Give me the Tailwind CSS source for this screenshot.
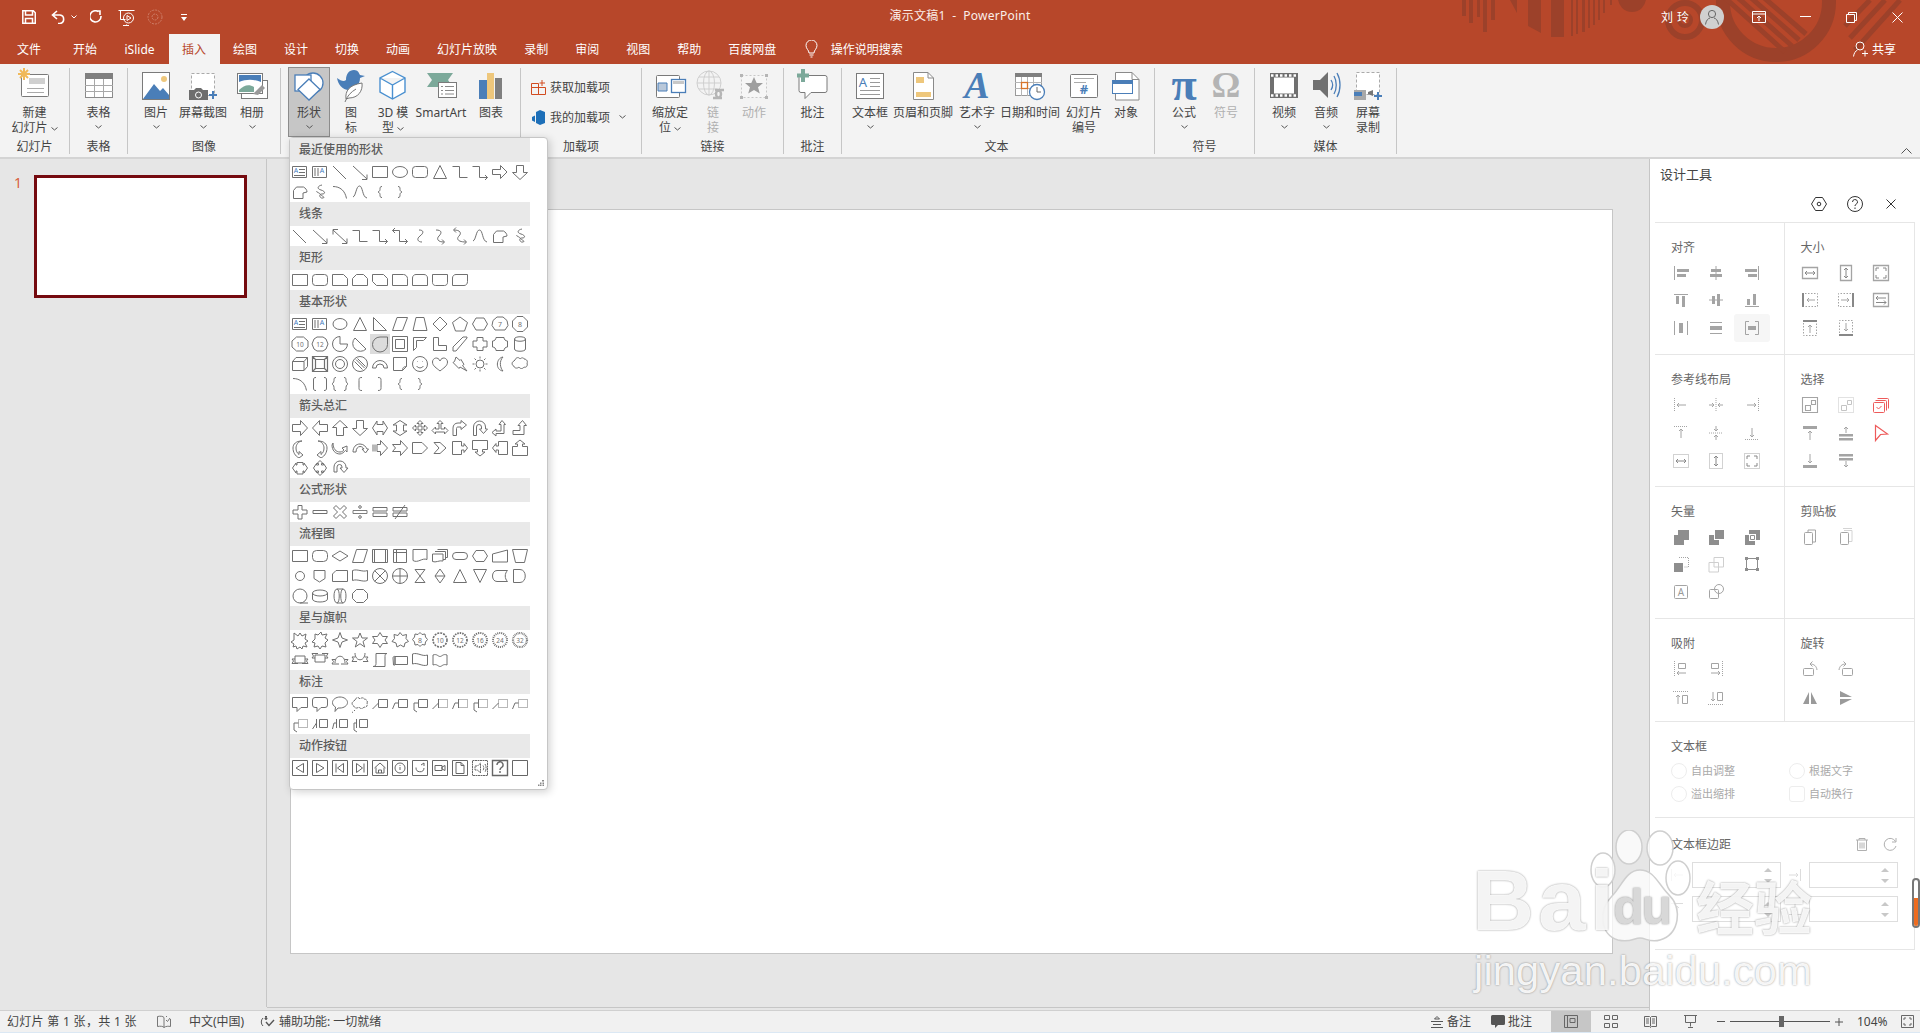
<!DOCTYPE html>
<html lang="zh-CN">
<head>
<meta charset="utf-8">
<title>演示文稿1 - PowerPoint</title>
<script src="https://cdn.jsdelivr.net/npm/@tailwindcss/browser@4"></script>
</head>
<body class="font-['Noto_Sans','Noto_Sans_CJK_SC',sans-serif]">
<div class="relative w-[1920px] h-[1033px] overflow-hidden flex flex-col bg-[#e6e6e6] text-[12px] leading-[15px] text-[#444]">

<!-- title bar -->
<header class="relative h-[64px] shrink-0 bg-[#b7472a] text-white flex flex-col">
  <svg class="absolute left-[1440px] top-0 w-[480px] h-[64px]" viewBox="0 0 480 64" fill="#9c412a">
    <path d="M22 0h4v16h-4zM29 0h4v23h-4zM37 0h3v17h-3zM43 0h4v32h-4zM51 0h4v20h-4zM70 0h7v13zM88 0h13v33l-13-7zM111 0h13v37h-13zM131 0h2v36h-2zM136 0h2v34h-2zM142 0h3v32h-3zM148 0h2v28h-2zM153 0h2v25h-2zM158 0h2v20h-2zM163 0h2v13h-2zM170 0h2v5h-2z"/>
    <circle cx="192" cy="-2" r="14"/>
    <g fill="none" stroke="#9c412a">
      <circle cx="245" cy="20" r="17" stroke-width="6"/>
      <circle cx="245" cy="20" r="6" stroke-width="4"/>
      <circle cx="336" cy="2" r="53" stroke-width="14"/>
      <path stroke-width="5" d="M283-4l62 56M296-4l56 50M309-4l50 44M322-4l44 38M430 0l-25 26M445 0l-35 38M460 0l-45 50"/>
    </g>
  </svg>
  <div class="absolute inset-x-0 top-[7px] text-center text-[12px] leading-[17px] tracking-[.25px] text-[#fbeee9]">演示文稿1&nbsp; - &nbsp;PowerPoint</div>
  <div class="relative h-[34px] flex items-center pl-[22px]">
    <svg class="w-[14px] h-[14px]" viewBox="0 0 14 14" fill="none" stroke="#fff" stroke-width="1.5"><path d="M.8.8h10.5l2 2v10.4H.8zM3.5 1v4h7V1M3.5 13V8.5h7V13"/></svg>
    <svg class="ml-[15px] w-[15px] h-[14px]" viewBox="0 0 15 14" fill="none" stroke="#fff" stroke-width="1.6"><path d="M6 1L1.5 5 6 9M1.5 5H9a4.3 4.3 0 0 1 0 8.5H7"/></svg>
    <svg class="ml-[5px] w-[6px] h-[4px]" viewBox="0 0 6 4" fill="none" stroke="#fff"><path d="M.5.500L3 3 5.500.5"/></svg>
    <svg class="ml-[13px] w-[13px] h-[14px]" viewBox="0 0 13 14" fill="none" stroke="#fff" stroke-width="1.6"><path d="M8.500 1.700A5.600 5.600 0 1 0 11 6M6 1h4v4"/></svg>
    <svg class="ml-[15px] w-[17px] h-[17px]" viewBox="0 0 17 17" fill="none" stroke="#fff"><path d="M.5 1.500h16M2.500 1.500v9h5M8.500 15.500v1M5 16.500h6"/><circle cx="10.500" cy="9" r="5"/><path d="M9 6.500l4 2.500-4 2.500z"/></svg>
    <svg class="ml-[12px] w-[16px] h-[16px] opacity-40" viewBox="0 0 16 16" fill="none" stroke="#f3cfc4" stroke-dasharray="2 1"><circle cx="8" cy="8" r="7"/><circle cx="8" cy="8" r="3"/></svg>
    <svg class="ml-[18px] w-[6px] h-[7px]" viewBox="0 0 6 7" fill="#fff"><path d="M0 0h6v1H0zM0 3h6L3 7z"/></svg>
    <div class="ml-auto tracking-[4px] text-[12px]">刘玲</div>
    <div class="ml-[7px] size-[24px] rounded-full bg-[#d0d0d0] flex items-center justify-center">
      <svg class="size-[16px]" viewBox="0 0 16 16" fill="none" stroke="#666"><circle cx="8" cy="5" r="3.600"/><path d="M1.500 15.500c.5-4 2.500-6 4.500-6.500M14.500 15.500c-.5-4-2.500-6-4.500-6.500"/></svg>
    </div>
    <div class="ml-[12px] w-[46px] flex justify-center"><svg class="w-[14px] h-[12px]" viewBox="0 0 14 12" fill="none" stroke="#fff"><path d="M.5.500h13v11H.5zM.5 3h13M7 10V5M5 7l2-2 2 2"/></svg></div>
    <div class="w-[46px] flex justify-center"><svg class="w-[11px] h-[2px]" viewBox="0 0 11 2" fill="#fff"><path d="M0 0h11v1H0z"/></svg></div>
    <div class="w-[46px] flex justify-center"><svg class="w-[11px] h-[11px]" viewBox="0 0 11 11" fill="none" stroke="#fff"><path d="M.5 2.500h8v8h-8zM2.500 2.500v-2h8v8h-2"/></svg></div>
    <div class="w-[46px] flex justify-center"><svg class="w-[11px] h-[11px]" viewBox="0 0 11 11" fill="none" stroke="#fff"><path d="M.5.500l10 10M10.500.500l-10 10"/></svg></div>
  </div>
  <nav class="relative h-[30px] flex items-center">
    <span class="pl-[17px] pr-[18.500px]">文件</span>
    <span class="px-[13.500px]">开始</span>
    <span class="w-[58px] text-center">iSlide</span>
    <span class="px-[13.500px] h-full flex items-center bg-[#f3f3f3] text-[#b7472a]">插入</span>
    <span class="px-[13.500px]">绘图</span>
    <span class="px-[13.500px]">设计</span>
    <span class="px-[13.500px]">切换</span>
    <span class="px-[13.500px]">动画</span>
    <span class="px-[13.500px]">幻灯片放映</span>
    <span class="px-[13.500px]">录制</span>
    <span class="px-[13.500px]">审阅</span>
    <span class="px-[13.500px]">视图</span>
    <span class="px-[13.500px]">帮助</span>
    <span class="px-[13.500px]">百度网盘</span>
    <svg class="ml-[15px] w-[13px] h-[18px]" viewBox="0 0 13 18" fill="none" stroke="#fff"><path d="M4 13c0-3-3-4-3-7.500a5.500 5.500 0 0 1 11 0C12 9 9 10 9 13zM4.500 15h4M5.500 17h2"/></svg>
    <span class="ml-[13px]">操作说明搜索</span>
    <span class="ml-auto mr-[24px] flex items-center gap-[4px]">
      <svg class="w-[15px] h-[16px]" viewBox="0 0 15 16" fill="none" stroke="#fff"><circle cx="7" cy="5" r="4"/><path d="M.5 15.500c.5-3.500 2-5.500 4-6.500M9 12.500h6M12 9.500v6"/></svg>
      共享
    </span>
  </nav>
</header>

<!-- ribbon -->
<section class="relative h-[95px] shrink-0 bg-[#f3f3f3] border-b-2 border-[#d4d4d4] flex pt-[4px]">
  <!-- 幻灯片 -->
  <div class="w-[70px] h-[86px] border-r border-[#c6c6c6] flex flex-col">
    <div class="h-[72px] flex">
      <div class="w-[69px] flex flex-col items-center">
        <svg class="size-[34px]" viewBox="0 0 34 34"><rect x="3.500" y="6.500" width="27" height="22" rx="1" fill="#fff" stroke="#7a7a7a"/><rect x="11" y="10" width="16" height="6" fill="#d0d0d0"/><path d="M9 20.500h17M9 24.500h17" stroke="#aaa"/><path d="M6 0v12M0 6h12M2 2l8 8M10 2l-8 8" stroke="#f0b95a" stroke-width="2"/></svg>
        <span class="mt-[3px]">新建</span><span>幻灯片 <svg class="inline w-[7px] h-[4px]" viewBox="0 0 7 4" fill="none" stroke="#555"><path d="M.5.500L3.500 3l3-2.500"/></svg></span>
      </div>
    </div>
    <div class="text-center leading-[14px]">幻灯片</div>
  </div>
  <!-- 表格 -->
  <div class="w-[58px] h-[86px] border-r border-[#c6c6c6] flex flex-col">
    <div class="h-[72px] flex flex-col items-center">
      <svg class="size-[34px]" viewBox="0 0 34 34"><rect x="3.500" y="5.500" width="27" height="24" fill="#fff" stroke="#8a8a8a"/><rect x="3" y="5" width="28" height="6" fill="#7f7f7f"/><path d="M3 17.500h28M3 23.500h28M12.500 11v18M21.500 11v18" stroke="#a8a8a8"/></svg>
      <span class="mt-[3px]">表格</span>
      <svg class="mt-[5px] w-[7px] h-[4px]" viewBox="0 0 7 4" fill="none" stroke="#555"><path d="M.5.500L3.500 3l3-2.500"/></svg>
    </div>
    <div class="text-center leading-[14px]">表格</div>
  </div>
  <!-- 图像 -->
  <div class="w-[153px] h-[86px] border-r border-[#c6c6c6] flex flex-col">
    <div class="h-[72px] flex pl-[6px]">
      <div class="w-[44px] flex flex-col items-center">
        <svg class="size-[34px]" viewBox="0 0 34 34"><rect x="3.500" y="4.500" width="27" height="27" fill="#fff" stroke="#7a7a7a"/><circle cx="25" cy="11" r="3" fill="#eec77c"/><path d="M4 31l11-15 6 7 3-3 6 7v4z" fill="#4a7eb8"/></svg>
        <span class="mt-[3px]">图片</span>
        <svg class="mt-[5px] w-[7px] h-[4px]" viewBox="0 0 7 4" fill="none" stroke="#555"><path d="M.5.500L3.500 3l3-2.500"/></svg>
      </div>
      <div class="w-[50px] flex flex-col items-center">
        <svg class="size-[34px]" viewBox="0 0 34 34"><rect x="5.500" y="5.500" width="23" height="22" fill="#fff" stroke="#aaa" stroke-dasharray="3 2"/><path d="M3 22h5l2-2h5l2 2h5v10H3z" fill="#6d6d6d"/><circle cx="12.500" cy="27" r="3" fill="#6d6d6d" stroke="#fff"/><path d="M27 23v8M23 27h8" stroke="#4a7eb8" stroke-width="2"/></svg>
        <span class="mt-[3px] whitespace-nowrap">屏幕截图</span>
        <svg class="mt-[5px] w-[7px] h-[4px]" viewBox="0 0 7 4" fill="none" stroke="#555"><path d="M.5.500L3.500 3l3-2.500"/></svg>
      </div>
      <div class="w-[48px] flex flex-col items-center">
        <svg class="size-[34px]" viewBox="0 0 34 34"><rect x="6.500" y="12.500" width="26" height="18" fill="#fff" stroke="#7a7a7a"/><rect x="2.500" y="5.500" width="25" height="20" fill="#fff" stroke="#7a7a7a"/><path d="M4 7h22v7c-7-3-15-3-22 0z" fill="#4a7eb8"/><path d="M4 22c5-5 10-6 15-3v5H4z" fill="#7ca99a"/><path d="M18 26l9-9 3 3-7 7z" fill="#999"/></svg>
        <span class="mt-[3px]">相册</span>
        <svg class="mt-[5px] w-[7px] h-[4px]" viewBox="0 0 7 4" fill="none" stroke="#555"><path d="M.5.500L3.500 3l3-2.500"/></svg>
      </div>
    </div>
    <div class="text-center leading-[14px]">图像</div>
  </div>
  <!-- 插图 -->
  <div class="w-[240px] h-[86px] border-r border-[#c6c6c6] flex flex-col">
    <div class="h-[72px] flex pl-[7px]">
      <div class="w-[42px] h-[70px] -mt-[1px] bg-[#c6c6c6] border border-[#8c8c8c] flex flex-col items-center">
        <svg class="size-[34px] shrink-0" viewBox="0 0 34 34" fill="#fff" stroke="#4a7eb8" stroke-width="1.300"><circle cx="21" cy="15" r="10"/><rect x="3" y="7" width="16" height="16"/><path d="M17 11l11 10.500L17 32 6 21.500z"/></svg>
        <span class="mt-[3px]">形状</span>
        <svg class="mt-[5px] w-[7px] h-[4px]" viewBox="0 0 7 4" fill="none" stroke="#555"><path d="M.5.500L3.500 3l3-2.500"/></svg>
      </div>
      <div class="w-[42px] flex flex-col items-center">
        <svg class="size-[34px]" viewBox="0 0 34 34"><path d="M3 10c4 3 7 4 9 2 0-6 3-10 8-10 4 0 5 3 6 5l5 1-5 2c0 6-4 11-11 12C8 22 4 16 3 10z" fill="#4a7eb8"/><path d="M12 31c-1-8 3-14 16-16 1 8-4 15-13 15z" fill="#fff" stroke="#777"/><path d="M11 34c2-6 6-10 11-13" fill="none" stroke="#777"/></svg>
        <span class="mt-[3px]">图</span><span>标</span>
      </div>
      <div class="w-[42px] flex flex-col items-center">
        <svg class="size-[34px]" viewBox="0 0 34 34" fill="#fff" stroke="#4a90d0" stroke-width="1.400"><path d="M16.500 3.500L29 10v14l-12.500 7L4 24V10zM4 10l12.500 7L29 10M16.500 17v14"/></svg>
        <span class="mt-[3px] whitespace-nowrap">3D 模</span><span>型 <svg class="inline w-[7px] h-[4px]" viewBox="0 0 7 4" fill="none" stroke="#555"><path d="M.5.500L3.500 3l3-2.500"/></svg></span>
      </div>
      <div class="w-[54px] flex flex-col items-center">
        <svg class="size-[34px]" viewBox="0 0 34 34"><path d="M3 5h26l-5 7 5 7H3l5-7z" fill="#7ca99a"/><rect x="14.500" y="14.500" width="18" height="15" fill="#fff" stroke="#7a7a7a"/><path d="M17 18.500h2M21 18.500h9M17 22.500h2M21 22.500h9M17 26h2M21 26h9" stroke="#8a8a8a"/></svg>
        <span class="mt-[3px]">SmartArt</span>
      </div>
      <div class="w-[46px] flex flex-col items-center">
        <svg class="size-[34px]" viewBox="0 0 34 34"><rect x="5" y="12" width="8" height="19" fill="#4a7eb8"/><rect x="13" y="5" width="7" height="26" fill="#eec77c"/><rect x="21" y="10" width="7" height="21" fill="#7f7f7f"/></svg>
        <span class="mt-[3px]">图表</span>
      </div>
    </div>
    <div class="text-center leading-[14px]">插图</div>
  </div>
  <!-- 加载项 -->
  <div class="w-[121px] h-[86px] border-r border-[#c6c6c6] flex flex-col">
    <div class="h-[72px] flex flex-col pl-[10px] pt-[11px] gap-[14px]">
      <div class="flex items-center gap-[4px] h-[16px]">
        <svg class="size-[15px]" viewBox="0 0 15 15" fill="none" stroke="#d24b1f"><path d="M.5 3.500h7v4h-7zM.5 7.500h7v7h-7zM7.500 7.500h7v7h-7zM11 0v6M8.500 3h5.500" /></svg>
        <span>获取加载项</span>
      </div>
      <div class="flex items-center gap-[4px] h-[16px]">
        <svg class="size-[15px]" viewBox="0 0 15 15" fill="#1d6fb8"><path d="M5 2l4-2 5 2v11l-5 2-4-2zM1 7l3-1.500V12L1 10.500z"/></svg>
        <span>我的加载项</span>
        <svg class="ml-[5px] w-[7px] h-[4px]" viewBox="0 0 7 4" fill="none" stroke="#555"><path d="M.5.500L3.500 3l3-2.500"/></svg>
      </div>
    </div>
    <div class="text-center leading-[14px]">加载项</div>
  </div>
  <!-- 链接 -->
  <div class="w-[142px] h-[86px] border-r border-[#c6c6c6] flex flex-col">
    <div class="h-[72px] flex pl-[6px]">
      <div class="w-[44px] flex flex-col items-center">
        <svg class="size-[34px]" viewBox="0 0 34 34"><rect x="3.500" y="7.500" width="23" height="22" rx="1" fill="#fff" stroke="#7a7a7a"/><path d="M5 15h9v8H5z" fill="#b9c8da" stroke="#4a7eb8"/><rect x="18.500" y="11.500" width="14" height="13" fill="#fff" stroke="#4a7eb8" stroke-width="1.300"/><rect x="20" y="13" width="11" height="3" fill="#c8c8c8"/></svg>
        <span class="mt-[3px]">缩放定</span><span>位 <svg class="inline w-[7px] h-[4px]" viewBox="0 0 7 4" fill="none" stroke="#555"><path d="M.5.500L3.500 3l3-2.500"/></svg></span>
      </div>
      <div class="w-[42px] flex flex-col items-center text-[#b0b0b0]">
        <svg class="size-[34px]" viewBox="0 0 34 34" fill="none" stroke="#cfcfcf"><circle cx="13" cy="15" r="12"/><ellipse cx="13" cy="15" rx="5.500" ry="12"/><path d="M1 15h24M3 9h20M3 21h20M13 3v24"/><path d="M17 30h4a4 4 0 0 0 0-8h-2M28 22h-4a4 4 0 0 0 0 8h2" stroke="#b5b5b5" stroke-width="2.500"/></svg>
        <span class="mt-[3px]">链</span><span>接</span>
      </div>
      <div class="w-[40px] flex flex-col items-center text-[#b0b0b0]">
        <svg class="size-[34px]" viewBox="0 0 34 34"><rect x="4.500" y="7.500" width="25" height="22" fill="#f6f6f6" stroke="#c8c8c8" stroke-dasharray="2 2"/><path d="M17 9l2.700 6h6.300l-5 4.200 1.800 6.300L17 22l-5.800 3.500 1.800-6.300-5-4.200h6.300z" fill="#9e9e9e"/><path d="M3 6h3v3H3zM28 6h3v3h-3zM3 28h3v3H3zM28 28h3v3h-3z" fill="#b5b5b5"/></svg>
        <span class="mt-[3px]">动作</span>
      </div>
    </div>
    <div class="text-center leading-[14px]">链接</div>
  </div>
  <!-- 批注 -->
  <div class="w-[58px] h-[86px] border-r border-[#c6c6c6] flex flex-col">
    <div class="h-[72px] flex flex-col items-center">
      <svg class="size-[34px]" viewBox="0 0 34 34"><path d="M5 7.500h24a2 2 0 0 1 2 2v13a2 2 0 0 1-2 2H15l-6 6v-6H5a2 2 0 0 1-2-2v-13a2 2 0 0 1 2-2z" fill="#fff" stroke="#7a7a7a"/><path d="M7 1v13M1 7.500h12" stroke="#7ca99a" stroke-width="4"/></svg>
      <span class="mt-[3px]">批注</span>
    </div>
    <div class="text-center leading-[14px]">批注</div>
  </div>
  <!-- 文本 -->
  <div class="w-[313px] h-[86px] border-r border-[#c6c6c6] flex flex-col">
    <div class="h-[72px] flex pl-[5px]">
      <div class="w-[46px] flex flex-col items-center">
        <svg class="size-[34px]" viewBox="0 0 34 34"><rect x="3.500" y="5.500" width="27" height="25" fill="#fff" stroke="#7a7a7a"/><text x="10" y="19" font-size="13" fill="#4a7eb8" text-anchor="middle">A</text><path d="M17 10.500h10M17 14.500h10M17 18.500h10M7 22.500h20M7 26.500h20" stroke="#9a9a9a"/></svg>
        <span class="mt-[3px]">文本框</span>
        <svg class="mt-[5px] w-[7px] h-[4px]" viewBox="0 0 7 4" fill="none" stroke="#555"><path d="M.5.500L3.500 3l3-2.500"/></svg>
      </div>
      <div class="w-[60px] flex flex-col items-center">
        <svg class="size-[34px]" viewBox="0 0 34 34"><path d="M7.500 4.500H22l5.500 5.500v21.500h-20z" fill="#fff" stroke="#8a8a8a"/><path d="M22 4.500V10h5.500" fill="none" stroke="#8a8a8a"/><rect x="10" y="9" width="8" height="6" fill="#eec77c"/><rect x="10" y="24" width="15" height="5" fill="#eec77c"/></svg>
        <span class="mt-[3px] whitespace-nowrap">页眉和页脚</span>
      </div>
      <div class="w-[48px] flex flex-col items-center">
        <span class="h-[34px] leading-[34px] text-[38px] font-['Liberation_Serif',serif] italic font-bold text-[#4a7eb8]">A</span>
        <span class="mt-[3px]">艺术字</span>
        <svg class="mt-[5px] w-[7px] h-[4px]" viewBox="0 0 7 4" fill="none" stroke="#555"><path d="M.5.500L3.500 3l3-2.500"/></svg>
      </div>
      <div class="w-[58px] flex flex-col items-center">
        <svg class="size-[34px]" viewBox="0 0 34 34"><rect x="2.500" y="5.500" width="26" height="22" fill="#fff" stroke="#9a9a9a"/><rect x="2" y="5" width="27" height="4" fill="#7f7f7f"/><path d="M2 14.500h27M2 20.500h27M8.500 9v19M14.500 9v19M20.500 9v19" stroke="#b5b5b5"/><rect x="8.500" y="14.500" width="6" height="6" fill="#fff" stroke="#d8742a" stroke-width="1.300"/><circle cx="24" cy="24" r="7.500" fill="#fff" stroke="#4a7eb8" stroke-width="1.300"/><path d="M24 19v5h4" fill="none" stroke="#666"/></svg>
        <span class="mt-[3px] whitespace-nowrap">日期和时间</span>
      </div>
      <div class="w-[50px] flex flex-col items-center">
        <svg class="size-[34px]" viewBox="0 0 34 34"><rect x="3.500" y="6.500" width="27" height="23" rx="1" fill="#fff" stroke="#7a7a7a"/><path d="M7 10.500h20M7 14.500h12" stroke="#aaa"/><text x="17" y="26" font-size="13" fill="#4a7eb8" text-anchor="middle" font-weight="700">#</text></svg>
        <span class="mt-[3px] whitespace-nowrap">幻灯片</span><span>编号</span>
      </div>
      <div class="w-[34px] flex flex-col items-center">
        <svg class="size-[34px]" viewBox="0 0 34 34"><path d="M6.500 4.500H23l7 7v20.500H6.500z" fill="#fff" stroke="#8a8a8a"/><path d="M23 4.500v7h7" fill="none" stroke="#8a8a8a"/><rect x="3.500" y="12.500" width="20" height="13" fill="#fff" stroke="#4a7eb8"/><rect x="3" y="12" width="21" height="4" fill="#4a7eb8"/></svg>
        <span class="mt-[3px]">对象</span>
      </div>
    </div>
    <div class="text-center leading-[14px] -ml-[3px]">文本</div>
  </div>
  <!-- 符号 -->
  <div class="w-[100px] h-[86px] border-r border-[#c6c6c6] flex flex-col">
    <div class="h-[72px] flex pl-[8px]">
      <div class="w-[42px] flex flex-col items-center">
        <span class="h-[34px] leading-[34px] text-[46px] font-['Liberation_Serif',serif] font-bold text-[#4a7eb8]">π</span>
        <span class="mt-[3px]">公式</span>
        <svg class="mt-[5px] w-[7px] h-[4px]" viewBox="0 0 7 4" fill="none" stroke="#555"><path d="M.5.500L3.500 3l3-2.500"/></svg>
      </div>
      <div class="w-[42px] flex flex-col items-center text-[#b0b0b0]">
        <span class="h-[34px] leading-[34px] text-[36px] font-['Liberation_Serif',serif] font-bold text-[#b4b4b4]">Ω</span>
        <span class="mt-[3px]">符号</span>
      </div>
    </div>
    <div class="text-center leading-[14px]">符号</div>
  </div>
  <!-- 媒体 -->
  <div class="w-[142px] h-[86px] border-r border-[#c6c6c6] flex flex-col">
    <div class="h-[72px] flex pl-[8px]">
      <div class="w-[42px] flex flex-col items-center">
        <svg class="size-[34px]" viewBox="0 0 34 34"><rect x="3" y="5" width="28" height="25" fill="#6f6f6f"/><rect x="7" y="9.500" width="20" height="16" fill="#fff"/><path d="M4 7.500h26M4 27.500h26" stroke="#fff" stroke-width="2.500" stroke-dasharray="2.500 2"/></svg>
        <span class="mt-[3px]">视频</span>
        <svg class="mt-[5px] w-[7px] h-[4px]" viewBox="0 0 7 4" fill="none" stroke="#555"><path d="M.5.500L3.500 3l3-2.500"/></svg>
      </div>
      <div class="w-[42px] flex flex-col items-center">
        <svg class="size-[34px]" viewBox="0 0 34 34"><path d="M4 12h7l8-8v26l-8-8H4z" fill="#707070"/><path d="M22 12c2 3 2 7 0 10M25 8c3 5 3 13 0 18M28 5c4 7 4 17 0 24" fill="none" stroke="#4a7eb8" stroke-width="1.300"/></svg>
        <span class="mt-[3px]">音频</span>
        <svg class="mt-[5px] w-[7px] h-[4px]" viewBox="0 0 7 4" fill="none" stroke="#555"><path d="M.5.500L3.500 3l3-2.500"/></svg>
      </div>
      <div class="w-[42px] flex flex-col items-center">
        <svg class="size-[34px]" viewBox="0 0 34 34"><rect x="5.500" y="4.500" width="23" height="22" fill="#fff" stroke="#aaa" stroke-dasharray="3 2"/><rect x="3" y="22" width="12" height="10" fill="#a8a8a8"/><rect x="3" y="24" width="8" height="4" fill="#4a7eb8"/><path d="M17 24l5-2v6l-5-2z" fill="#777"/><path d="M27 24v8M23 28h8" stroke="#4a7eb8" stroke-width="2"/></svg>
        <span class="mt-[3px]">屏幕</span><span>录制</span>
      </div>
    </div>
    <div class="text-center leading-[14px]">媒体</div>
  </div>
  <svg class="absolute right-[8px] bottom-[3px] w-[11px] h-[6px]" viewBox="0 0 11 6" fill="none" stroke="#555"><path d="M.5 5.500l5-5 5 5"/></svg>
</section>

<!-- main -->
<main class="flex h-[851px] shrink-0">
  <aside class="w-[267px] border-r border-[#c6c6c6] h-[848px] flex items-start pt-[16px]">
    <span class="w-[34px] pl-[14px] text-[14px] leading-[16px] text-[#d9603d]">1</span>
    <div class="w-[213px] h-[123px] bg-white border-[3px] border-[#750a0f]"></div>
  </aside>
  <div class="w-[1382px] h-[849px] border-b border-[#c6c6c6] pl-[23px] pt-[50px]">
    <div class="w-[1323px] h-[745px] bg-white border border-[#c6c6c6]"></div>
  </div>
  <aside class="w-[271px] bg-white border-l border-[#c6c6c6] flex flex-col text-[#666]">
    <div class="h-[63px] relative flex flex-col">
      <div class="pl-[10px] pt-[7px] text-[13px] leading-[17px] text-[#444]">设计工具</div>
      <div class="flex justify-end items-center gap-[20px] pr-[21px] mt-[13px] text-[#333]">
        <svg class="size-[16px]" viewBox="0 0 16 16" fill="none" stroke="#333"><path d="M4.500 1.500h7L15.500 8l-4 6.500h-7L.5 8z"/><circle cx="8" cy="8" r="1.800"/></svg>
        <svg class="size-[16px]" viewBox="0 0 16 16" fill="none" stroke="#333"><circle cx="8" cy="8" r="7.500"/><path d="M5.500 6a2.500 2.500 0 1 1 3.500 2.300c-.7.400-1 .8-1 1.700M8 11.500v1.500"/></svg>
        <svg class="size-[16px]" viewBox="0 0 16 16" fill="none" stroke="#333"><path d="M3.500 3.500l9 9M12.500 3.500l-9 9"/></svg>
      </div>
    </div>
    <div class="ml-[5px] w-[260px] border-r border-[#e6e6e6]">
      <div class="grid grid-cols-2 fill-none stroke-[#a4a4a4]">
        <!-- 对齐 -->
        <div class="h-[132px] border-t border-r border-[#e6e6e6] pt-[17px] flex flex-col">
          <div class="pl-[16px] leading-[16px]">对齐</div>
          <div class="pl-[8px] mt-[3px] flex flex-wrap [&>div]:w-[35.500px] [&>div]:h-[27.500px] [&>div]:flex [&>div]:items-center [&>div]:justify-center">
            <div><svg class="size-5" viewBox="0 0 20 20"><path d="M3.500 3v14"/><path fill="#a4a4a4" stroke="none" d="M6 6h12v3H6zM6 11h9v3H6z"/></svg></div>
            <div><svg class="size-5" viewBox="0 0 20 20"><path d="M10 3v14"/><path fill="#a4a4a4" stroke="none" d="M5 6h10v3H5zM4 11h12v3H4z"/></svg></div>
            <div><svg class="size-5" viewBox="0 0 20 20"><path d="M16.500 3v14"/><path fill="#a4a4a4" stroke="none" d="M3 6h12v3H3zM6 11h9v3H6z"/></svg></div>
            <div><svg class="size-5" viewBox="0 0 20 20"><path d="M3 4.500h14"/><path fill="#a4a4a4" stroke="none" d="M5 6h3v8H5zM11 6h3v11h-3z"/></svg></div>
            <div><svg class="size-5" viewBox="0 0 20 20"><path d="M3 10h14"/><path fill="#a4a4a4" stroke="none" d="M6 6h3v8H6zM11 4h3v12h-3z"/></svg></div>
            <div><svg class="size-5" viewBox="0 0 20 20"><path d="M3 16.500h14"/><path fill="#a4a4a4" stroke="none" d="M5 9h3v6H5zM11 4h3v11h-3z"/></svg></div>
            <div><svg class="size-5" viewBox="0 0 20 20"><path d="M3.500 3v14M16.500 3v14"/><path fill="#a4a4a4" stroke="none" d="M8 5h4v10H8z"/></svg></div>
            <div><svg class="size-5" viewBox="0 0 20 20"><path d="M4 4.500h12M4 15.500h12"/><path fill="#a4a4a4" stroke="none" d="M4 8h12v4H4z"/></svg></div>
            <div class="bg-[#f6f6f6] rounded-[3px]"><svg class="size-5" viewBox="0 0 20 20"><path d="M7 3.500H3.500v13H7M13 3.500h3.500v13H13"/><path fill="#a4a4a4" stroke="none" d="M6 8h8v4H6z"/></svg></div>
          </div>
        </div>
        <!-- 大小 -->
        <div class="h-[132px] border-t border-[#e6e6e6] pt-[17px] flex flex-col">
          <div class="pl-[16px] leading-[16px]">大小</div>
          <div class="pl-[8px] mt-[3px] flex flex-wrap [&>div]:w-[35.500px] [&>div]:h-[27.500px] [&>div]:flex [&>div]:items-center [&>div]:justify-center">
            <div><svg class="size-5" viewBox="0 0 20 20"><path d="M2.500 4.500h15v11h-15z" stroke-width="1.300"/><path d="M5 10h10M7 8l-2 2 2 2M13 8l2 2-2 2" stroke="#888"/></svg></div>
            <div><svg class="size-5" viewBox="0 0 20 20"><path d="M4.500 2.500h11v15h-11z" stroke-width="1.300"/><path d="M10 5v10M8 7l2-2 2 2M8 13l2 2 2-2" stroke="#888"/></svg></div>
            <div><svg class="size-5" viewBox="0 0 20 20"><path d="M2.500 2.500h15v15h-15z" stroke-width="1.300"/><path d="M5 8V5h3M12 5h3v3M15 12v3h-3M8 15H5v-3" stroke="#888"/></svg></div>
            <div><svg class="size-5" viewBox="0 0 20 20"><path d="M3 3v14" stroke="#888" stroke-width="2"/><path d="M5 3.500h12.500v13H5" stroke-dasharray="1.500 1.500"/><path d="M7 10h8M9 8l-2 2 2 2"/></svg></div>
            <div><svg class="size-5" viewBox="0 0 20 20"><path d="M17 3v14" stroke="#888" stroke-width="2"/><path d="M15 3.500H2.500v13H15" stroke-dasharray="1.500 1.500"/><path d="M5 10h8M11 8l2 2-2 2"/></svg></div>
            <div><svg class="size-5" viewBox="0 0 20 20"><path d="M2.500 3.500h15v13h-15z" stroke-width="1.300"/><path d="M5 8h10M7 6L5 8l2 2M5 12.500h10M13 10.500l2 2-2 2" stroke="#888"/></svg></div>
            <div><svg class="size-5" viewBox="0 0 20 20"><path d="M3 3h14" stroke="#888" stroke-width="2"/><path d="M3.500 5v12.500h13V5" stroke-dasharray="1.500 1.500"/><path d="M10 15V7M8 9l2-2 2 2"/></svg></div>
            <div><svg class="size-5" viewBox="0 0 20 20"><path d="M3 17h14" stroke="#888" stroke-width="2"/><path d="M3.500 15V2.500h13V15" stroke-dasharray="1.500 1.500"/><path d="M10 5v8M8 11l2 2 2-2"/></svg></div>
          </div>
        </div>
        <!-- 参考线布局 -->
        <div class="h-[132px] border-t border-r border-[#e6e6e6] pt-[17px] flex flex-col">
          <div class="pl-[16px] leading-[16px]">参考线布局</div>
          <div class="pl-[8px] mt-[3px] flex flex-wrap [&>div]:w-[35.500px] [&>div]:h-[28px] [&>div]:flex [&>div]:items-center [&>div]:justify-center">
            <div><svg class="size-5" viewBox="0 0 20 20"><path d="M3.500 3v14" stroke-dasharray="1 1"/><path d="M6 10h9M8 8l-2 2 2 2"/></svg></div>
            <div><svg class="size-5" viewBox="0 0 20 20"><path d="M10 3v14" stroke-dasharray="1 1"/><path d="M3 10h5M6 8l2 2-2 2M17 10h-5M14 8l-2 2 2 2"/></svg></div>
            <div><svg class="size-5" viewBox="0 0 20 20"><path d="M16.500 3v14" stroke-dasharray="1 1"/><path d="M5 10h9M12 8l2 2-2 2"/></svg></div>
            <div><svg class="size-5" viewBox="0 0 20 20"><path d="M3 3.500h14" stroke-dasharray="1 1"/><path d="M10 6v9M8 8l2-2 2 2"/></svg></div>
            <div><svg class="size-5" viewBox="0 0 20 20"><path d="M3 10h14" stroke-dasharray="1 1"/><path d="M10 3v5M8 6l2 2 2-2M10 17v-5M8 14l2-2 2 2"/></svg></div>
            <div><svg class="size-5" viewBox="0 0 20 20"><path d="M3 16.500h14" stroke-dasharray="1 1"/><path d="M10 5v9M8 12l2 2 2-2"/></svg></div>
            <div><svg class="size-5" viewBox="0 0 20 20"><path d="M2.500 3.500h15v13h-15z" stroke-dasharray="1 1"/><path d="M5 10h10M7 8l-2 2 2 2M13 8l2 2-2 2" stroke="#888"/></svg></div>
            <div><svg class="size-5" viewBox="0 0 20 20"><path d="M3.500 2.500h13v15h-13z" stroke-dasharray="1 1"/><path d="M10 5v10M8 7l2-2 2 2M8 13l2 2 2-2" stroke="#888"/></svg></div>
            <div><svg class="size-5" viewBox="0 0 20 20"><path d="M2.500 2.500h15v15h-15z" stroke-dasharray="1 1"/><path d="M5 8V5h3M12 5h3v3M15 12v3h-3M8 15H5v-3" stroke="#888"/></svg></div>
          </div>
        </div>
        <!-- 选择 -->
        <div class="h-[132px] border-t border-[#e6e6e6] pt-[17px] flex flex-col">
          <div class="pl-[16px] leading-[16px]">选择</div>
          <div class="pl-[8px] mt-[3px] flex flex-wrap [&>div]:w-[35.500px] [&>div]:h-[28px] [&>div]:flex [&>div]:items-center [&>div]:justify-center">
            <div><svg class="size-5" viewBox="0 0 20 20"><path d="M2.500 2.500h15v15h-15zM5.500 10.500h5v5h-5zM11.500 5.500h4v4h-4z" stroke-width="1.100"/></svg></div>
            <div><svg class="size-5" viewBox="0 0 20 20" stroke="#c4c4c4"><path d="M2.500 2.500h15v15h-15z" stroke-dasharray="1 1"/><path d="M5.500 10.500h5v5h-5zM11.500 5.500h4v4h-4z"/></svg></div>
            <div><svg class="size-5" viewBox="0 0 20 20" stroke="#ee5a5a"><path d="M6.500 3.500h10a1 1 0 0 1 1 1v9M4.500 5.500h10a1 1 0 0 1 1 1v9" stroke="#ee5a5a"/><rect x="2.500" y="7.500" width="11" height="10" rx="1" stroke="#ee5a5a"/><path d="M5.500 12l2 2 3-3" stroke="#ee5a5a"/></svg></div>
            <div><svg class="size-5" viewBox="0 0 20 20"><path fill="#a4a4a4" stroke="none" d="M3 3h14v3H3z"/><path d="M10 8v9M8 10l2-2 2 2"/></svg></div>
            <div><svg class="size-5" viewBox="0 0 20 20"><path fill="#a4a4a4" stroke="none" d="M3 11h14v2.500H3zM3 15h14v2.500H3z"/><path d="M10 10V4M8 6l2-2 2 2"/></svg></div>
            <div><svg class="size-5" viewBox="0 0 20 20"><path d="M4.500 2.500L16.500 11l-7 .5-5 6z" stroke="#ee5a5a" stroke-width="1.200"/></svg></div>
            <div><svg class="size-5" viewBox="0 0 20 20"><path fill="#a4a4a4" stroke="none" d="M3 14h14v3H3z"/><path d="M10 3v9M8 10l2 2 2-2"/></svg></div>
            <div><svg class="size-5" viewBox="0 0 20 20"><path fill="#a4a4a4" stroke="none" d="M3 3h14v2.500H3zM3 7h14v2.500H3z"/><path d="M10 10v6M8 14l2 2 2-2"/></svg></div>
          </div>
        </div>
        <!-- 矢量 -->
        <div class="h-[132px] border-t border-r border-[#e6e6e6] pt-[17px] flex flex-col">
          <div class="pl-[16px] leading-[16px]">矢量</div>
          <div class="pl-[8px] mt-[3px] flex flex-wrap [&>div]:w-[35.500px] [&>div]:h-[27.500px] [&>div]:flex [&>div]:items-center [&>div]:justify-center">
            <div><svg class="size-5" viewBox="0 0 20 20"><path fill="#8e8e8e" stroke="none" d="M7 3h11v10h-5v5H3V8h4z"/></svg></div>
            <div><svg class="size-5" viewBox="0 0 20 20"><path fill="#8e8e8e" stroke="none" d="M3 8h5v5h5v5H3zM9 3h9v9H9z"/></svg></div>
            <div><svg class="size-5" viewBox="0 0 20 20"><path fill="#8e8e8e" stroke="none" d="M3 8h4v6h6v4H3zM7 3h11v10h-4V7H7z"/><path stroke="#8e8e8e" d="M8.500 8.500h4v4h-4z"/></svg></div>
            <div><svg class="size-5" viewBox="0 0 20 20"><path fill="#8e8e8e" stroke="none" d="M3 9h9v9H3z"/><path stroke-dasharray="1 1" d="M8 3.500h9.500V13H13"/></svg></div>
            <div><svg class="size-5" viewBox="0 0 20 20"><path d="M3 8.500h9.500V18H3zM8 3.500h9.500V13H8z" stroke="#cfcfcf"/></svg></div>
            <div><svg class="size-5" viewBox="0 0 20 20"><path d="M4.500 4.500h11v11h-11z" stroke="#8e8e8e"/><path fill="#8e8e8e" stroke="none" d="M3 3h3v3H3zM14 3h3v3h-3zM3 14h3v3H3zM14 14h3v3h-3z"/></svg></div>
            <div><svg class="size-5" viewBox="0 0 20 20"><rect x="3.500" y="3.500" width="13" height="13" rx="1"/><text x="10" y="14" font-size="10" fill="#9a9a9a" stroke="none" text-anchor="middle">A</text></svg></div>
            <div><svg class="size-5" viewBox="0 0 20 20"><rect x="3.500" y="7.500" width="9" height="9" rx="1"/><circle cx="13" cy="7" r="4.500"/></svg></div>
          </div>
        </div>
        <!-- 剪贴板 -->
        <div class="h-[132px] border-t border-[#e6e6e6] pt-[17px] flex flex-col">
          <div class="pl-[16px] leading-[16px]">剪贴板</div>
          <div class="pl-[8px] mt-[3px] flex flex-wrap [&>div]:w-[35.500px] [&>div]:h-[27.500px] [&>div]:flex [&>div]:items-center [&>div]:justify-center">
            <div><svg class="size-5" viewBox="0 0 20 20"><rect x="4.500" y="5.500" width="8" height="12" rx="1"/><path d="M8 5V3h7.500v12H13"/></svg></div>
            <div><svg class="size-5" viewBox="0 0 20 20"><rect x="4.500" y="5.500" width="8" height="12" rx="1"/><path stroke="#d4d4d4" d="M8 3.500h8v11h-3"/><path stroke="#d4d4d4" d="M7 1.500h9"/></svg></div>
          </div>
        </div>
        <!-- 吸附 -->
        <div class="h-[103px] border-t border-r border-[#e6e6e6] pt-[17px] flex flex-col">
          <div class="pl-[16px] leading-[16px]">吸附</div>
          <div class="w-[79px] pl-[8px] mt-[3px] flex flex-wrap [&>div]:w-[35.500px] [&>div]:h-[28.500px] [&>div]:flex [&>div]:items-center [&>div]:justify-center">
            <div><svg class="size-5" viewBox="0 0 20 20"><path d="M3.500 2v16" stroke-dasharray="1 1"/><path d="M7.500 4.500h7v5h-7zM6 14h9M8 12l-2 2 2 2"/></svg></div>
            <div><svg class="size-5" viewBox="0 0 20 20"><path d="M16.500 2v16" stroke-dasharray="1 1"/><path d="M5.500 4.500h7v5h-7zM5 14h9M12 12l2 2-2 2"/></svg></div>
            <div><svg class="size-5" viewBox="0 0 20 20"><path d="M2 3.500h16" stroke-dasharray="1 1"/><path d="M11.500 7.500h5v8h-5zM7 16V7M5 9l2-2 2 2"/></svg></div>
            <div><svg class="size-5" viewBox="0 0 20 20"><path d="M2 16.500h16" stroke-dasharray="1 1"/><path d="M11.500 4.500h5v8h-5zM7 4v9M5 11l2 2 2-2"/></svg></div>
          </div>
        </div>
        <!-- 旋转 -->
        <div class="h-[103px] border-t border-[#e6e6e6] pt-[17px] flex flex-col">
          <div class="pl-[16px] leading-[16px]">旋转</div>
          <div class="w-[79px] pl-[8px] mt-[3px] flex flex-wrap [&>div]:w-[35.500px] [&>div]:h-[28.500px] [&>div]:flex [&>div]:items-center [&>div]:justify-center">
            <div><svg class="size-5" viewBox="0 0 20 20"><rect x="3.500" y="9.500" width="10" height="7" rx="1"/><path d="M17 11c-.5-4-3-6-7-6M12.500 2.500L10 5l2.500 2.500"/></svg></div>
            <div><svg class="size-5" viewBox="0 0 20 20"><rect x="6.500" y="9.500" width="10" height="7" rx="1"/><path d="M3 11c.5-4 3-6 7-6M7.500 2.500L10 5 7.500 7.500"/></svg></div>
            <div><svg class="size-5" viewBox="0 0 20 20"><path fill="#9a9a9a" stroke="none" d="M9 4v12H3zM11 4l6 12h-6z"/></svg></div>
            <div><svg class="size-5" viewBox="0 0 20 20"><path fill="#9a9a9a" stroke="none" d="M4 3l12 6H4zM4 11h12L4 17z"/></svg></div>
          </div>
        </div>
      </div>
      <!-- 文本框 -->
      <div class="h-[96px] border-t border-[#e6e6e6] pt-[17px] pl-[16px] relative">
        <div class="leading-[16px]">文本框</div>
        <div class="grid grid-cols-[118px_1fr] mt-[8px] gap-y-[7px] text-[11px] leading-[16px] text-[#aaa]">
          <div class="flex items-center gap-[4px]"><span class="size-[16px] rounded-full border border-[#ededed]"></span>自由调整</div>
          <div class="flex items-center gap-[4px]"><span class="size-[16px] rounded-full border border-[#ededed]"></span>根据文字</div>
          <div class="flex items-center gap-[4px]"><span class="size-[16px] rounded-full border border-[#ededed]"></span>溢出缩排</div>
          <div class="flex items-center gap-[4px]"><span class="size-[16px] rounded-[3px] border border-[#ededed]"></span>自动换行</div>
        </div>
      </div>
      <!-- 文本框边距 -->
      <div class="h-[133px] border-t border-b border-[#e6e6e6] pt-[18px] relative">
        <div class="pl-[16px] pr-[17px] flex items-center justify-between h-[16px]">
          <span>文本框边距</span>
          <span class="flex items-center gap-[14px]">
            <svg class="size-[14px]" viewBox="0 0 14 14" fill="none" stroke="#b0b0b0"><path d="M1 3h12M4 3V1.500h6V3M2.500 3v10.500h9V3M5 5.500v6M7 5.500v6M9 5.500v6"/></svg>
            <svg class="size-[14px]" viewBox="0 0 14 14" fill="none" stroke="#b0b0b0"><path d="M12.500 4.500A6 6 0 1 0 13 9M13 1v4H9"/></svg>
          </span>
        </div>
        <div class="grid grid-cols-[22px_89px_7px_21px_89px] gap-y-[8px] items-center pl-[15px] mt-[10px]">
          <svg class="size-[14px]" viewBox="0 0 14 14" fill="none" stroke="#dcdcdc"><path d="M1.500 1v12M4 7h9M6 5L4 7l2 2"/></svg>
          <div class="relative h-[26px] border border-[#dedede]"><svg class="absolute right-[8px] top-[5px] w-[8px] h-[15px]" viewBox="0 0 8 15" fill="#c8c8c8"><path d="M4 0l4 4H0zM0 11h8l-4 4z"/></svg></div>
          <span></span>
          <svg class="size-[14px]" viewBox="0 0 14 14" fill="none" stroke="#dcdcdc"><path d="M12.500 1v12M1 7h9M8 5l2 2-2 2"/></svg>
          <div class="relative h-[26px] border border-[#dedede]"><svg class="absolute right-[8px] top-[5px] w-[8px] h-[15px]" viewBox="0 0 8 15" fill="#c8c8c8"><path d="M4 0l4 4H0zM0 11h8l-4 4z"/></svg></div>
          <svg class="size-[14px]" viewBox="0 0 14 14" fill="none" stroke="#dcdcdc"><path d="M1 1.500h12M7 4v9M5 6l2-2 2 2"/></svg>
          <div class="relative h-[26px] border border-[#dedede]"><svg class="absolute right-[8px] top-[5px] w-[8px] h-[15px]" viewBox="0 0 8 15" fill="#c8c8c8"><path d="M4 0l4 4H0zM0 11h8l-4 4z"/></svg></div>
          <span></span>
          <svg class="size-[14px]" viewBox="0 0 14 14" fill="none" stroke="#dcdcdc"><path d="M1 12.500h12M7 1v9M5 8l2 2 2-2"/></svg>
          <div class="relative h-[26px] border border-[#dedede]"><svg class="absolute right-[8px] top-[5px] w-[8px] h-[15px]" viewBox="0 0 8 15" fill="#c8c8c8"><path d="M4 0l4 4H0zM0 11h8l-4 4z"/></svg></div>
        </div>
      </div>
    </div>
  </aside>
</main>

<!-- status bar -->
<footer class="h-[23px] shrink-0 bg-[#f1f1f1] border-t border-[#d0d0d0] border-b border-b-[#dbe8f4] flex items-center text-[12px] text-[#444]">
  <span class="ml-[7px] w-[130px] whitespace-nowrap tracking-[.3px]">幻灯片 第 1 张，共 1 张</span>
  <svg class="ml-[20px] w-[14px] h-[13px]" viewBox="0 0 14 13" fill="none" stroke="#777"><path d="M7 2.500C6 1 3 1 .5 1.500v10c2.500-.5 5.500-.5 6.500 1M7 2.500v10M9 1.500h1M13.500 4v7.500c-2-.4-4.500-.5-6.500 1M9 5l1.500 1.500L13 3"/></svg>
  <span class="ml-[18px] w-[54px] whitespace-nowrap">中文(中国)</span>
  <svg class="ml-[17px] w-[15px] h-[14px]" viewBox="0 0 15 14" fill="none" stroke="#555"><path d="M3 3a5.500 5.500 0 0 0 0 8M5 1.500h2"/><path d="M6 7l3 3.500L14 5" stroke-width="1.400"/><circle cx="6" cy="3.500" r="1" fill="#555"/></svg>
  <span class="ml-[4px] w-[104px] whitespace-nowrap">辅助功能: 一切就绪</span>
  <svg class="ml-auto w-[12px] h-[12px]" viewBox="0 0 12 12" fill="none" stroke="#555"><path d="M0 11.500h12M2 8.500h8M0 5.500h12M6 .5L3.500 3h5z"/></svg>
  <span class="ml-[4px]">备注</span>
  <svg class="ml-[20px] w-[14px] h-[13px]" viewBox="0 0 14 13" fill="#555"><path d="M1.500 0h11A1.500 1.500 0 0 1 14 1.500v7a1.500 1.500 0 0 1-1.500 1.500H7l-3 3v-3H1.500A1.500 1.500 0 0 1 0 8.500v-7A1.500 1.500 0 0 1 1.500 0z"/></svg>
  <span class="ml-[3px]">批注</span>
  <div class="ml-[19px] w-[40px] h-[21px] bg-[#c6c6c6] flex items-center justify-center"><svg class="w-[14px] h-[13px]" viewBox="0 0 14 13" fill="none" stroke="#666"><path d="M.5.500h13v12H.5zM3.500.5v12M6 3.500h5v4H6z"/></svg></div>
  <svg class="ml-[13px] w-[14px] h-[13px]" viewBox="0 0 14 13" fill="none" stroke="#666"><path d="M.5.500h5v4h-5zM8.500.5h5v4h-5zM.5 8.500h5v4h-5zM8.500 8.500h5v4h-5z"/></svg>
  <svg class="ml-[26px] w-[13px] h-[13px]" viewBox="0 0 13 13" fill="none" stroke="#666"><path d="M.5 1.500h5l1 1 1-1h5v10h-5l-1 1-1-1h-5zM2 4h3M2 6h3M2 8h3M8 4h3M8 6h3M8 8h3M6.500 2.500v9"/></svg>
  <svg class="ml-[27px] w-[13px] h-[13px]" viewBox="0 0 13 13" fill="none" stroke="#666"><path d="M0 .5h13M1.500.5v7h10v-7M6.500 7.500v4M4 12.500h5"/></svg>
  <svg class="ml-[20px] w-[8px] h-[2px]" viewBox="0 0 8 2" fill="#555"><path d="M0 0h8v1H0z"/></svg>
  <div class="relative ml-[5px] w-[100px] h-[1px] bg-[#555]"><span class="absolute left-[49px] -top-[5px] w-[5px] h-[11px] bg-[#666]"></span></div>
  <svg class="ml-[5px] w-[8px] h-[8px]" viewBox="0 0 8 8" fill="none" stroke="#555"><path d="M4 0v8M0 4h8"/></svg>
  <span class="ml-[14px] w-[32px] whitespace-nowrap">104%</span>
  <svg class="ml-[12px] mr-[6px] w-[13px] h-[13px]" viewBox="0 0 13 13" fill="none" stroke="#666"><path d="M.5.500h12v12H.5zM3 5V3h2M8 3h2v2M10 8v2H8M5 10H3V8"/></svg>
</footer>

<!-- shapes gallery popup -->
<div class="absolute left-[289px] top-[137px] w-[259px] h-[653px] bg-white border border-[#c6c6c6] rounded-[4px] shadow-[2px_2px_8px_rgba(0,0,0,.18)] text-[12px] text-[#5c5c5c]">
  <div class="fill-none stroke-[#707070] [&_svg]:size-5 [&_svg]:block w-[240px]">
    <div class="h-[24px] bg-[#e9e9e9] pl-[9px] font-medium leading-[24px]">最近使用的形状</div>
    <div class="flex flex-wrap">
      <svg viewBox="0 0 20 20"><path d="M2.500 4.500h14v11h-14zM9 7.500h6M9 10.500h6M4 13.500h11"/><text x="6" y="11" font-size="7" fill="#3f7cc0" stroke="none" text-anchor="middle">A</text></svg>
      <svg viewBox="0 0 20 20"><path d="M2.500 4.500h14v11h-14zM5 6v8M8 6v8"/><text x="12" y="11" font-size="7" fill="#3f7cc0" stroke="none" text-anchor="middle">A</text></svg>
      <svg viewBox="0 0 20 20"><path d="M3 4l13 13"/></svg>
      <svg viewBox="0 0 20 20"><path d="M3 4l14 13M17 12.500v5h-5"/></svg>
      <svg viewBox="0 0 20 20"><path d="M2.500 4.500h15v11h-15z"/></svg>
      <svg viewBox="0 0 20 20"><ellipse cx="10" cy="10" rx="7.500" ry="5.500"/></svg>
      <svg viewBox="0 0 20 20"><rect x="2.500" y="4.500" width="15" height="11" rx="3"/></svg>
      <svg viewBox="0 0 20 20"><path d="M10 3.500l6.500 13h-13z"/></svg>
      <svg viewBox="0 0 20 20"><path d="M2.500 4.500h7v11h8"/></svg>
      <svg viewBox="0 0 20 20"><path d="M2.500 4.500h7v11h8M15 13l2.500 2.500L15 18"/></svg>
      <svg viewBox="0 0 20 20"><path d="M2.500 7.500h8v-4l6.500 6.500-6.500 6.500v-4h-8z"/></svg>
      <svg viewBox="0 0 20 20"><path d="M6.500 3.500h7v7h4L10 17.500 2.500 10.500h4z"/></svg>
      <svg viewBox="0 0 20 20"><path d="M3.500 16.500v-8l3-3.500h7c2 1 3.500 3 3.500 5l-4 1v5.500z"/></svg>
      <svg viewBox="0 0 20 20"><path d="M12 3c-5 1-5 4-1 5s5 4 1 4-2 5 1 4-2-2-3-4-4-1-3-3"/></svg>
      <svg viewBox="0 0 20 20"><path d="M3 4.500c7 0 12 4 13.500 12"/></svg>
      <svg viewBox="0 0 20 20"><path d="M3 15c3-1 3-11 6.500-11S12 15 17 16"/></svg>
      <svg viewBox="0 0 20 20"><path d="M12 4.500c-2 0-2 1-2 3s-2 2.500-2 2.500 2 .5 2 2.500 0 3 2 3"/></svg>
      <svg viewBox="0 0 20 20"><path d="M8 4.500c2 0 2 1 2 3s2 2.500 2 2.500-2 .5-2 2.500 0 3-2 3"/></svg>
    </div>
    <div class="h-[24px] bg-[#e9e9e9] pl-[9px] font-medium leading-[24px]">线条</div>
    <div class="flex flex-wrap">
      <svg viewBox="0 0 20 20"><path d="M3 4l13 13"/></svg>
      <svg viewBox="0 0 20 20"><path d="M3 4l14 13M17 12.500v5h-5"/></svg>
      <svg viewBox="0 0 20 20"><path d="M3 4l14 13M17 12.500v5h-5M3 8.500V3.500h5"/></svg>
      <svg viewBox="0 0 20 20"><path d="M2.500 4.500h7v11h8"/></svg>
      <svg viewBox="0 0 20 20"><path d="M2.500 4.500h7v11h8M15 13l2.500 2.500L15 18"/></svg>
      <svg viewBox="0 0 20 20"><path d="M2.500 4.500h7v11h8M15 13l2.500 2.500L15 18M5 2L2.500 4.500 5 7"/></svg>
      <svg viewBox="0 0 20 20"><path d="M9 4c5 0 5 3 1 6s-2 6 2 6"/></svg>
      <svg viewBox="0 0 20 20"><path d="M6 4c6 0 6 3 3 6s-1 6 5 6M12 13.500l2.500 2.500-2.500 2.500"/></svg>
      <svg viewBox="0 0 20 20"><path d="M4 4c6 0 8 3 5 6s-1 6 7 6M14 13.500l2.500 2.500-2.500 2.500M6 1.500L3.500 4 6 6.500"/></svg>
      <svg viewBox="0 0 20 20"><path d="M3 15c3-1 3-11 6.500-11S12 15 17 16"/></svg>
      <svg viewBox="0 0 20 20"><path d="M3.500 16.500v-8l3-3.500h7c2 1 3.500 3 3.500 5l-4 1v5.500z"/></svg>
      <svg viewBox="0 0 20 20"><path d="M12 3c-5 1-5 4-1 5s5 4 1 4-2 5 1 4-2-2-3-4-4-1-3-3"/></svg>
    </div>
    <div class="h-[24px] bg-[#e9e9e9] pl-[9px] font-medium leading-[24px]">矩形</div>
    <div class="flex flex-wrap">
      <svg viewBox="0 0 20 20"><path d="M2.500 4.500h15v11h-15z"/></svg>
      <svg viewBox="0 0 20 20"><rect x="2.500" y="4.500" width="15" height="11" rx="3"/></svg>
      <svg viewBox="0 0 20 20"><path d="M2.500 4.500h11l4 4v7h-15z"/></svg>
      <svg viewBox="0 0 20 20"><path d="M6.500 4.500h7l4 4v7h-15v-7z"/></svg>
      <svg viewBox="0 0 20 20"><path d="M2.500 4.500h11l4 4v7h-11l-4-4z"/></svg>
      <svg viewBox="0 0 20 20"><path d="M2.500 4.500h11c2 0 4 2 4 4v7h-15z"/></svg>
      <svg viewBox="0 0 20 20"><path d="M6 4.500h8c2 0 3.500 1.500 3.500 3.500v7.500h-15V8c0-2 1.500-3.500 3.500-3.500z"/></svg>
      <svg viewBox="0 0 20 20"><path d="M2.500 4.500h15v8c0 1.500-1 3-3 3h-9c-2 0-3-1.500-3-3z"/></svg>
      <svg viewBox="0 0 20 20"><path d="M6 4.500h11.500v7c0 2.500-1.500 4-3.500 4H2.500V8c0-2 1.500-3.500 3.500-3.500z"/></svg>
    </div>
    <div class="h-[24px] bg-[#e9e9e9] pl-[9px] font-medium leading-[24px]">基本形状</div>
    <div class="flex flex-wrap">
      <svg viewBox="0 0 20 20"><path d="M2.500 4.500h14v11h-14zM9 7.500h6M9 10.500h6M4 13.500h11"/><text x="6" y="11" font-size="7" fill="#3f7cc0" stroke="none" text-anchor="middle">A</text></svg>
      <svg viewBox="0 0 20 20"><path d="M2.500 4.500h14v11h-14zM5 6v8M8 6v8"/><text x="12" y="11" font-size="7" fill="#3f7cc0" stroke="none" text-anchor="middle">A</text></svg>
      <svg viewBox="0 0 20 20"><ellipse cx="10" cy="10" rx="7" ry="5.500"/></svg>
      <svg viewBox="0 0 20 20"><path d="M10 3.500l6.500 13h-13z"/></svg>
      <svg viewBox="0 0 20 20"><path d="M3.500 3.500l13 13h-13z"/></svg>
      <svg viewBox="0 0 20 20"><path d="M7 3.500h10.500l-5 13H2.500z"/></svg>
      <svg viewBox="0 0 20 20"><path d="M6 3.500h8l3 13H3z"/></svg>
      <svg viewBox="0 0 20 20"><path d="M10 3l7 7-7 7-7-7z"/></svg>
      <svg viewBox="0 0 20 20"><path d="M10 3l7.500 5.500-3 8.500h-9l-3-8.500z"/></svg>
      <svg viewBox="0 0 20 20"><path d="M6 4h8l3.500 6-3.500 6H6l-3.500-6z"/></svg>
      <svg viewBox="0 0 20 20"><path d="M7 3h6l4 3.500 1 5-3 4.500H5l-3-4.500 1-5z"/><text x="10" y="12.500" font-size="7" fill="#707070" stroke="none" text-anchor="middle">7</text></svg>
      <svg viewBox="0 0 20 20"><path d="M7 2.500h6L17.500 7v6L13 17.500H7L2.500 13V7z"/><text x="10" y="12.500" font-size="7" fill="#707070" stroke="none" text-anchor="middle">8</text></svg>
      <svg viewBox="0 0 20 20"><path d="M6.500 3h7l4.500 4v6l-4.500 4h-7L2 13V7z"/><text x="10" y="12.500" font-size="6.500" fill="#707070" stroke="none" text-anchor="middle">10</text></svg>
      <svg viewBox="0 0 20 20"><path d="M7 3h6l3 2 2 5-2 5-3 2H7l-3-2-2-5 2-5z"/><text x="10" y="12.500" font-size="6.500" fill="#707070" stroke="none" text-anchor="middle">12</text></svg>
      <svg viewBox="0 0 20 20"><path d="M10 10h7.500A7.500 7.500 0 1 1 10 2.500z"/></svg>
      <svg viewBox="0 0 20 20"><path d="M5 4L16 15A7.500 7.500 0 0 1 5 4z"/></svg>
      <svg class="bg-[#dcdcdc]" viewBox="0 0 20 20"><path d="M10 3h7.500v7.500A7.500 7.500 0 1 1 10 3z"/></svg>
      <svg viewBox="0 0 20 20"><path d="M2.500 2.500h15v15h-15zM5.500 5.500h9v9h-9z"/></svg>
      <svg viewBox="0 0 20 20"><path d="M3.500 3.500h13l-3 3H6.500v7l-3 3z"/></svg>
      <svg viewBox="0 0 20 20"><path d="M3.500 3.500h5v8h8v5h-13z"/></svg>
      <svg viewBox="0 0 20 20"><path d="M3 17v-4L13 3h4v1L6 17z"/></svg>
      <svg viewBox="0 0 20 20"><path d="M7 3.500h6v3.500h4v6h-4v3.500H7V13H3V7h4z"/></svg>
      <svg viewBox="0 0 20 20"><path d="M6 3.500h8c0 2 1.500 3.500 3.500 3.500v6c-2 0-3.500 1.500-3.500 3.500H6c0-2-1.500-3.500-3.500-3.500V7C4.500 7 6 5.500 6 3.500z"/></svg>
      <svg viewBox="0 0 20 20"><path d="M4.500 5v10c0 3 11 3 11 0V5c0-3-11-3-11 0zM4.500 5c0 3 11 3 11 0"/></svg>
      <svg viewBox="0 0 20 20"><path d="M2.500 7.500L6 3.500h11.500v9l-3.500 4H2.500zM2.500 7.500H14v9M14 7.500l3.500-4"/></svg>
      <svg viewBox="0 0 20 20"><path d="M2.500 2.500h15v15h-15zM5.500 5.500h9v9h-9zM2.500 2.500l3 3M17.500 2.500l-3 3M2.500 17.500l3-3M17.500 17.500l-3-3" stroke-width="1.200"/></svg>
      <svg viewBox="0 0 20 20"><circle cx="10" cy="10" r="7.500"/><circle cx="10" cy="10" r="4.500"/></svg>
      <svg viewBox="0 0 20 20"><circle cx="10" cy="10" r="7.500"/><path d="M6 5.500l8.500 8.500M4.500 7.500l8 8M7.500 4.500l8 8"/></svg>
      <svg viewBox="0 0 20 20"><path d="M2.500 14a7.500 7.500 0 0 1 15 0h-3.500a4 4 0 0 0-8 0z"/></svg>
      <svg viewBox="0 0 20 20"><path d="M3.500 3.500h13v9l-4 4h-9zM12.500 16.500c0-2 .5-4 4-4"/></svg>
      <svg viewBox="0 0 20 20"><circle cx="10" cy="10" r="7.500"/><path d="M7 7.500h.5M12.500 7.500h.5M6.500 12c2 2.500 5 2.500 7 0"/></svg>
      <svg viewBox="0 0 20 20"><path d="M10 7c-2-5-7.500-3-7.500 1 0 4 4 6 7.500 9 3.500-3 7.500-5 7.500-9 0-4-5.500-6-7.500-1z"/></svg>
      <svg viewBox="0 0 20 20"><path d="M6 3l4 3.500 1-1 3 5-1.500 1L17 17l-7-4-1 1.500-6-6 1.500-1z"/></svg>
      <svg viewBox="0 0 20 20"><circle cx="10" cy="10" r="4"/><path d="M10 2.500v2M10 15.500v2M2.500 10h2M15.500 10h2M4.500 4.500l1.500 1.500M14 14l1.500 1.500M4.500 15.500L6 14M14 6l1.500-1.500"/></svg>
      <svg viewBox="0 0 20 20"><path d="M13 3c-7 1-8 13 0 14-3-3-4-10 0-14z"/></svg>
      <svg viewBox="0 0 20 20"><path d="M5 6c1-3 4-3 5-1 2-2 4-1 4 0 3 0 4 3 3 4 1 3-1 5-3 4-1 2-4 2-5 0-2 2-5 1-5-1-2 0-3-4 0-5z"/></svg>
      <svg viewBox="0 0 20 20"><path d="M3 4.500c7 0 12 4 13.500 12"/></svg>
      <svg viewBox="0 0 20 20"><path d="M6 3.500C4 3.500 3.500 4 3.500 6v8c0 2 .5 2.500 2.500 2.500M14 3.500c2 0 2.500.5 2.500 2.500v8c0 2-.5 2.500-2.500 2.500"/></svg>
      <svg viewBox="0 0 20 20"><path d="M6 3.500c-2 0-2 1-2 3S2 10 2 10s2 1 2 3.500 0 3 2 3M14 3.500c2 0 2 1 2 3s2 3.500 2 3.500-2 1-2 3.500 0 3-2 3"/></svg>
      <svg viewBox="0 0 20 20"><path d="M12 3.500c-3 0-3 1-3 3v7c0 2 0 3 3 3"/></svg>
      <svg viewBox="0 0 20 20"><path d="M8 3.500c3 0 3 1 3 3v7c0 2 0 3-3 3"/></svg>
      <svg viewBox="0 0 20 20"><path d="M12 4.500c-2 0-2 1-2 3s-2 2.500-2 2.500 2 .5 2 2.500 0 3 2 3"/></svg>
      <svg viewBox="0 0 20 20"><path d="M8 4.500c2 0 2 1 2 3s2 2.500 2 2.500-2 .5-2 2.500 0 3-2 3"/></svg>
    </div>
    <div class="h-[24px] bg-[#e9e9e9] pl-[9px] font-medium leading-[24px]">箭头总汇</div>
    <div class="flex flex-wrap">
      <svg viewBox="0 0 20 20"><path d="M2.500 6.500h8v-4l7 7.500-7 7.500v-4h-8z"/></svg>
      <svg viewBox="0 0 20 20"><path d="M17.500 6.500h-8v-4l-7 7.500 7 7.500v-4h8z"/></svg>
      <svg viewBox="0 0 20 20"><path d="M6.500 17.500v-8h-4L10 2.500l7.500 7h-4v8z"/></svg>
      <svg viewBox="0 0 20 20"><path d="M6.500 2.500v8h-4l7.500 7 7.500-7h-4v-8z"/></svg>
      <svg viewBox="0 0 20 20"><path d="M7 3L2.500 10 7 17v-3.500h6V17l4.500-7L13 3v3.500H7z"/></svg>
      <svg viewBox="0 0 20 20"><path d="M10 2.500L17 7h-3.500v6H17l-7 4.500L3 13h3.500V7H3z"/></svg>
      <svg viewBox="0 0 20 20"><path d="M10 2.500l3 3h-2v3.500h3.500v-2l3 3-3 3v-2H11v3.500h2l-3 3-3-3h2V11H5.500v2l-3-3 3-3v2H9V5.500H7z"/></svg>
      <svg viewBox="0 0 20 20"><path d="M10 2.500l3 3h-2v5.500h3.500V9l3.500 3.500-3.500 3.500v-2h-9v2L2 12.500 5.500 9v2H9V5.500H7z"/></svg>
      <svg viewBox="0 0 20 20"><path d="M3 17.500V10c0-3 2-5 5-5h3V2.500L16.500 7 11 11.500V9H8c-1 0-1.500.5-1.500 1.500v7z"/></svg>
      <svg viewBox="0 0 20 20"><path d="M3.500 17.500V9a6 6 0 0 1 12 0v2h2l-4 4.500-4-4.500h2V9a2.500 2.500 0 0 0-5 0v8.500z"/></svg>
      <svg viewBox="0 0 20 20"><path d="M12 2.500l3.500 4H14v9H6V18l-4-3.500L6 11v2h5V6.500H9z"/></svg>
      <svg viewBox="0 0 20 20"><path d="M12.500 2.500l4 5H14v9H3v-4h7v-5H8z"/></svg>
      <svg viewBox="0 0 20 20"><path d="M12 3c-4 .5-6 4-6 7s1 5 3 6.500v-3l4 3.500-4 3c-4-2-6-6-6-10s3-7 9-7z"/></svg>
      <svg viewBox="0 0 20 20"><path d="M8 3c4 .5 6 4 6 7s-1 5-3 6.500v-3l-4 3.500 4 3c4-2 6-6 6-10s-3-7-9-7z"/></svg>
      <svg viewBox="0 0 20 20"><path d="M3 5c0 6 3 9 7 9 2 0 3-1 4-2l-2-2 5-2v6l-1.500-1.500C14 14 12 16 10 16c-5 0-8-4-8-9z"/></svg>
      <svg viewBox="0 0 20 20"><path d="M3 14c0-5 3-8 7-8s6 3 7 5h1.500L15.500 15l-3.500-4h2c-1-1.500-2-2.500-4-2.500s-4 2-4 5.500z"/></svg>
      <svg viewBox="0 0 20 20"><path d="M3 6.500v7M5 6.500v7M7 6.500h3.500v-4l7 7.500-7 7.500v-4H7z"/></svg>
      <svg viewBox="0 0 20 20"><path d="M2.500 6.500h8v-4l7 7.500-7 7.500v-4h-8L5.500 10z"/></svg>
      <svg viewBox="0 0 20 20"><path d="M2.500 4.500H12l5.500 5.500-5.500 5.500H2.500z"/></svg>
      <svg viewBox="0 0 20 20"><path d="M4 4.500h6l6 5.500-6 5.500H4L9 10z"/></svg>
      <svg viewBox="0 0 20 20"><path d="M2.500 3.500h9v4.500H14V5.500l3.500 4.500-3.500 4.500V12h-2.500v4.500h-9z"/></svg>
      <svg viewBox="0 0 20 20"><path d="M2.500 2.500h15v9H12.500V14H15l-5 4-5-4h2.500v-2.500h-5z"/></svg>
      <svg viewBox="0 0 20 20"><path d="M17.500 3.500h-9v4.500H6V5.500L2.500 10 6 14.500V12h2.500v4.500h9z"/></svg>
      <svg viewBox="0 0 20 20"><path d="M2.500 17.500v-9h5V6H5l5-4 5 4h-2.500v2.500h5v9z"/></svg>
      <svg viewBox="0 0 20 20"><path d="M7 4.500h6v2.500h1V5l3.500 5-3.500 5v-2h-1v3H7v-3H6v2L2.500 10 6 5v2h1z"/></svg>
      <svg viewBox="0 0 20 20"><path d="M10 2.500l3 3h-1.500V7h2V5.500l3 4.500-3 4.500V13h-2v1.500H13l-3 3-3-3h1.500V13h-2v1.500L3.500 10l3-4.500V7h2V5.500H7z"/></svg>
      <svg viewBox="0 0 20 20"><path d="M4 14V9a6 6 0 0 1 12 0v1h2l-4 4.500L10 10h2V9a2.500 2.500 0 0 0-5 0v5z"/></svg>
    </div>
    <div class="h-[24px] bg-[#e9e9e9] pl-[9px] font-medium leading-[24px]">公式形状</div>
    <div class="flex flex-wrap">
      <svg viewBox="0 0 20 20"><path d="M8 3.500h4V8h5v4h-5v5H8v-5H3V8h5z"/></svg>
      <svg viewBox="0 0 20 20"><path d="M3 8.500h14v3H3z"/></svg>
      <svg viewBox="0 0 20 20"><path d="M6 3.500l4 4 4-4 2.500 2.500-4 4 4 4-2.500 2.500-4-4-4 4-2.500-2.500 4-4-4-4z"/></svg>
      <svg viewBox="0 0 20 20"><path d="M3 8.500h14v3H3z" stroke-width=".9"/><circle cx="10" cy="5" r="1.300"/><circle cx="10" cy="15" r="1.300"/></svg>
      <svg viewBox="0 0 20 20"><path d="M3 5.500h14v3.500H3zM3 11h14v3.500H3z"/></svg>
      <svg viewBox="0 0 20 20"><path d="M3 5.500h14v3.500H3zM3 11h14v3.500H3zM5 17L15 3"/></svg>
    </div>
    <div class="h-[24px] bg-[#e9e9e9] pl-[9px] font-medium leading-[24px]">流程图</div>
    <div class="flex flex-wrap">
      <svg viewBox="0 0 20 20"><path d="M2.500 4.500h15v11h-15z"/></svg>
      <svg viewBox="0 0 20 20"><rect x="2.500" y="4.500" width="15" height="11" rx="4"/></svg>
      <svg viewBox="0 0 20 20"><path d="M10 5l8 5-8 5-8-5z"/></svg>
      <svg viewBox="0 0 20 20"><path d="M6.500 3.500h11l-4 13h-11z"/></svg>
      <svg viewBox="0 0 20 20"><path d="M2.500 3.500h15v13h-15zM4.500 3.500v13M15.500 3.500v13"/></svg>
      <svg viewBox="0 0 20 20"><path d="M3.500 3.500h13v13h-13zM3.500 6.500h13M6.500 3.500v13"/></svg>
      <svg viewBox="0 0 20 20"><path d="M3 3.500h14v10c-5-2-9 4-14 1z"/></svg>
      <svg viewBox="0 0 20 20"><path d="M7.500 3.500h10v8h-2M5 5.500h10.500v8H13"/><path d="M2.500 8h10.500v7c-4-1-7 2-10.500.5z"/></svg>
      <svg viewBox="0 0 20 20"><rect x="2.500" y="6.500" width="15" height="7" rx="3.500"/></svg>
      <svg viewBox="0 0 20 20"><path d="M6 4.500h8l3.500 5.500-3.500 5.500H6L2.500 10z"/></svg>
      <svg viewBox="0 0 20 20"><path d="M2.500 8l15-4v12h-15z"/></svg>
      <svg viewBox="0 0 20 20"><path d="M2.500 3.500h15l-3 13h-9z"/></svg>
      <svg viewBox="0 0 20 20"><circle cx="10" cy="10" r="4.500"/></svg>
      <svg viewBox="0 0 20 20"><path d="M4 4.500h11v8l-5.500 3.500L4 12.500z"/></svg>
      <svg viewBox="0 0 20 20"><path d="M6 4.500h11.500v11h-15V8z"/></svg>
      <svg viewBox="0 0 20 20"><path d="M2.500 4.500c5-2 10 2 15 0v10c-5 2-10-2-15 0z"/></svg>
      <svg viewBox="0 0 20 20"><circle cx="10" cy="10" r="7.500"/><path d="M4.500 4.500l11 11M15.500 4.500l-11 11"/></svg>
      <svg viewBox="0 0 20 20"><circle cx="10" cy="10" r="7.500"/><path d="M10 2.500v15M2.500 10h15"/></svg>
      <svg viewBox="0 0 20 20"><path d="M5 3.500h10L5 16.500h10z"/></svg>
      <svg viewBox="0 0 20 20"><path d="M10 3l5 7-5 7-5-7zM5 10h10"/></svg>
      <svg viewBox="0 0 20 20"><path d="M10 3.500l6.500 13h-13z"/></svg>
      <svg viewBox="0 0 20 20"><path d="M3.500 3.500h13l-6.500 13z"/></svg>
      <svg viewBox="0 0 20 20"><path d="M17.500 4.500H7C1 4.500 1 15.500 7 15.500h10.500c-3-3-3-8 0-11z"/></svg>
      <svg viewBox="0 0 20 20"><path d="M3.500 3.500H10c7 0 7 13 0 13H3.500z"/></svg>
      <svg viewBox="0 0 20 20"><circle cx="10" cy="10" r="7"/><path d="M10 17h8"/></svg>
      <svg viewBox="0 0 20 20"><ellipse cx="10" cy="7" rx="7.500" ry="3"/><path d="M2.500 7v6c0 4 15 4 15 0V7"/></svg>
      <svg viewBox="0 0 20 20"><path d="M7 3c-4 0-4 14 0 14h6c4 0 4-14 0-14zM7 3c3 0 3 14 0 14M13 3c-3 0-3 14 0 14"/></svg>
      <svg viewBox="0 0 20 20"><path d="M6.500 3.500h7l4 4v5l-4 4h-7l-4-4v-5z"/></svg>
    </div>
    <div class="h-[24px] bg-[#e9e9e9] pl-[9px] font-medium leading-[24px]">星与旗帜</div>
    <div class="flex flex-wrap">
      <svg viewBox="0 0 20 20"><path d="M4 3l4 3 2-3 2 3 4-2-1 5 3 2-3 2 2 4-4-1-1 3-2-2-3 2-1-3-3 1 1-3-3-2 3-2z"/></svg>
      <svg viewBox="0 0 20 20"><path d="M5 4l3 1 3-3 1 3 5-1-2 4 3 2-3 3 1 4-4-1-2 3-2-3-4 1 1-4-3-1 3-3z"/></svg>
      <svg viewBox="0 0 20 20"><path d="M10 2.500l2 5.500 5.500 2-5.500 2-2 5.500-2-5.500L2.500 10 8 8z"/></svg>
      <svg viewBox="0 0 20 20"><path d="M10 3l2 5h5.500l-4.500 3.500 1.700 5.500-4.700-3.300-4.700 3.300L7 11.500 2.500 8H8z"/></svg>
      <svg viewBox="0 0 20 20"><path d="M10 2.500l2.500 4h5l-2.500 3.500 2.500 3.500h-5l-2.500 4-2.500-4h-5L5 10 2.500 6.500h5z"/></svg>
      <svg viewBox="0 0 20 20"><path d="M10 2.500l2.500 3 4-1-.5 4 2.500 3-3.500 1.500-1 4-3.500-2-3.500 2-1-4L2 11.500l2.500-3-.5-4 4 1z"/></svg>
      <svg viewBox="0 0 20 20"><path d="M10 2.500l2 2 3-.5.500 3 2 2.500-2 2.500-.5 3-3-.5-2 2-2-2-3 .5-.5-3-2-2.500 2-2.500.5-3 3 .5z"/><text x="10" y="12.500" font-size="7" fill="#707070" stroke="none" text-anchor="middle">8</text></svg>
      <svg viewBox="0 0 20 20"><circle cx="10" cy="10" r="7" stroke-dasharray="2 1" stroke-width="1.600"/><text x="10" y="12.500" font-size="6.500" fill="#707070" stroke="none" text-anchor="middle">10</text></svg>
      <svg viewBox="0 0 20 20"><circle cx="10" cy="10" r="7" stroke-dasharray="1.500 1" stroke-width="1.800"/><text x="10" y="12.500" font-size="6.500" fill="#707070" stroke="none" text-anchor="middle">12</text></svg>
      <svg viewBox="0 0 20 20"><circle cx="10" cy="10" r="7" stroke-dasharray="1.200 1" stroke-width="2"/><text x="10" y="12.500" font-size="6.500" fill="#707070" stroke="none" text-anchor="middle">16</text></svg>
      <svg viewBox="0 0 20 20"><circle cx="10" cy="10" r="7" stroke-dasharray="1 1" stroke-width="2"/><text x="10" y="12.500" font-size="6.500" fill="#707070" stroke="none" text-anchor="middle">24</text></svg>
      <svg viewBox="0 0 20 20"><circle cx="10" cy="10" r="7" stroke-dasharray=".8 .8" stroke-width="2.200"/><text x="10" y="12.500" font-size="6.500" fill="#707070" stroke="none" text-anchor="middle">32</text></svg>
      <svg viewBox="0 0 20 20"><path d="M5 6h10v7H5zM5 9H2l1.500 2L2 13.500h6M15 9h3l-1.500 2 1.500 2.500h-6"/></svg>
      <svg viewBox="0 0 20 20"><path d="M5 5h10v7H5zM5 8H2l1.500-2L2 3.500h6M15 8h3l-1.500-2L18 3.500h-6"/></svg>
      <svg viewBox="0 0 20 20"><path d="M5 13c0-9 10-9 10 0M5 9.500H2l1.500 2L2 14h7M15 9.500h3l-1.500 2L18 14h-7"/></svg>
      <svg viewBox="0 0 20 20"><path d="M5 3c0 9 10 9 10 0M5 7H2l1.500 2L2 11.500h5M15 7h3l-1.500 2 1.500 2.500h-5"/></svg>
      <svg viewBox="0 0 20 20"><path d="M6 3.500h11c-2 0-2 2-2 3v10H3c2 0 3-1 3-3z"/></svg>
      <svg viewBox="0 0 20 20"><path d="M5 6.500h12.500v8H5zM3 8c0-2 2-2 2-1v8H3.500z"/></svg>
      <svg viewBox="0 0 20 20"><path d="M2.500 4c5-2 10 3 15 1v10c-5 2-10-3-15-1z"/></svg>
      <svg viewBox="0 0 20 20"><path d="M3 5c4-1.500 5 1.500 7 1.500S13 3.500 17 5v10c-4-1.500-5 1.500-7 1.500S7 13.500 3 15z"/></svg>
    </div>
    <div class="h-[24px] bg-[#e9e9e9] pl-[9px] font-medium leading-[24px]">标注</div>
    <div class="flex flex-wrap">
      <svg viewBox="0 0 20 20"><path d="M2.500 3.500h15v10H11l-4 4v-4H2.500z"/></svg>
      <svg viewBox="0 0 20 20"><path d="M5 3.500h10a2.500 2.500 0 0 1 2.500 2.500v5a2.500 2.500 0 0 1-2.500 2.500h-4l-4 4v-4H5A2.500 2.500 0 0 1 2.500 11V6A2.500 2.500 0 0 1 5 3.500z"/></svg>
      <svg viewBox="0 0 20 20"><path d="M10 3c4 0 7.500 2.500 7.500 5.500S14 14 10 14h-2l-3 3.500.5-4.500C3.500 12 2.500 10.500 2.500 8.500 2.500 5.500 6 3 10 3z"/></svg>
      <svg viewBox="0 0 20 20"><path d="M5 6c1-3 4-3 5-1 2-2 4-1 4 0 3 0 4 3 3 4 1 3-1 5-3 4-1 2-4 2-5 0-2 2-5 1-5-1-2 0-3-4 0-5z" stroke-dasharray="3 .8"/><path d="M4 16l1 1M2 18l1 .500" /></svg>
      <svg viewBox="0 0 20 20"><path d="M8.500 5.500h9v8h-9zM8.500 9L2.500 15"/></svg>
      <svg viewBox="0 0 20 20"><path d="M8.500 5.500h9v8h-9zM8.500 9H5l-2.500 6"/></svg>
      <svg viewBox="0 0 20 20"><path d="M8.500 5.500h9v8h-9zM8.500 9H4v7l3 2"/></svg>
      <svg viewBox="0 0 20 20"><path d="M8.500 5.500h9v8h-9z" stroke-dasharray="1 1"/><path d="M8.500 5v9M8.500 9L2.500 15"/></svg>
      <svg viewBox="0 0 20 20"><path d="M8.500 5.500h9v8h-9z" stroke-dasharray="1 1"/><path d="M8.500 5v9M8.500 9H5l-2.500 6"/></svg>
      <svg viewBox="0 0 20 20"><path d="M8.500 5.500h9v8h-9z" stroke-dasharray="1 1"/><path d="M8.500 5v9M8.500 9H4v7l3 2"/></svg>
      <svg viewBox="0 0 20 20"><path d="M8.500 5.500h9v8h-9z" stroke-dasharray="1 1"/><path d="M8.500 9L2.500 15"/></svg>
      <svg viewBox="0 0 20 20"><path d="M8.500 5.500h9v8h-9z" stroke-dasharray="1 1"/><path d="M8.500 9H5l-2.500 6"/></svg>
      <svg viewBox="0 0 20 20"><path d="M8.500 5.500h9v8h-9z" stroke-dasharray="1 1"/><path d="M8.500 9H4v7l3 2"/></svg>
      <svg viewBox="0 0 20 20"><path d="M9.500 5.500h8v8h-8zM6.500 5v9M6.500 9l-4 6"/></svg>
      <svg viewBox="0 0 20 20"><path d="M9.500 5.500h8v8h-8zM6.500 5v9M6.500 9H4l-1.500 6"/></svg>
      <svg viewBox="0 0 20 20"><path d="M9.500 5.500h8v8h-8zM6.500 5v9M6.500 9H4v7l3 2"/></svg>
    </div>
    <div class="h-[24px] bg-[#e9e9e9] pl-[9px] font-medium leading-[24px]">动作按钮</div>
    <div class="flex flex-wrap [&_svg]:stroke-[#666]">
      <svg viewBox="0 0 20 20"><path d="M2.500 2.500h15v15h-15zM13.500 5.500v9L6 10z"/></svg>
      <svg viewBox="0 0 20 20"><path d="M2.500 2.500h15v15h-15zM6.500 5.500v9L14 10z"/></svg>
      <svg viewBox="0 0 20 20"><path d="M2.500 2.500h15v15h-15zM13.500 5.500v9L7.500 10zM6 5.500v9"/></svg>
      <svg viewBox="0 0 20 20"><path d="M2.500 2.500h15v15h-15zM6.500 5.500v9l6-4.500zM14 5.500v9"/></svg>
      <svg viewBox="0 0 20 20"><path d="M2.500 2.500h15v15h-15zM4.500 10L10 5l5.500 5M6 9.500V15h8V9.500M8.500 15v-3h3v3"/></svg>
      <svg viewBox="0 0 20 20"><path d="M2.500 2.500h15v15h-15z"/><circle cx="10" cy="10" r="5"/><path d="M10 7v.800M10 9v3"/></svg>
      <svg viewBox="0 0 20 20"><path d="M2.500 2.500h15v15h-15zM6 9.500a4 4 0 1 0 8 .500M14 8V5l-3 2"/></svg>
      <svg viewBox="0 0 20 20"><path d="M2.500 2.500h15v15h-15zM5 7.500h7v5H5zM12 9l3-1.500v5L12 11z"/></svg>
      <svg viewBox="0 0 20 20"><path d="M2.500 2.500h15v15h-15zM6 4.500h5l3 3v8H6zM11 4.500v3h3"/></svg>
      <svg viewBox="0 0 20 20"><path d="M2.500 2.500h15v15h-15zM5 8h2.500L10.500 5v10l-3-3H5zM13 7.500c1 1.500 1 3.500 0 5M15 6c1.500 2 1.500 6 0 8" stroke-dasharray="2 .500"/></svg>
      <svg viewBox="0 0 20 20"><path d="M2.500 2.500h15v15h-15zM7 7a3 3 0 1 1 4.500 2.500c-1 .8-1.500 1-1.500 2.500M10 13v2" stroke-width="1.400"/></svg>
      <svg viewBox="0 0 20 20"><path d="M2.500 2.500h15v15h-15z"/></svg>
    </div>
  </div>
  <svg class="absolute right-[3px] bottom-[3px] w-[6px] h-[6px]" viewBox="0 0 6 6" fill="#888"><path d="M4 0h2v1.500H4zM2 2.500h1.500V4H2zM4.500 2.500H6V4H4.500zM0 4.500h1.500V6H0zM2 4.500h1.500V6H2zM4.500 4.500H6V6H4.500z"/></svg>
</div>

<!-- panel scrollbar -->
<div class="absolute left-[1912px] top-[878px] w-[8px] h-[50px] rounded-[4px] border-2 border-[#777] bg-white overflow-hidden flex items-end">
  <div class="w-full h-[28px] bg-[#ed6c20]"></div>
</div>

<!-- watermark -->
<div class="absolute left-[1470px] top-[830px] w-[360px] h-[170px] pointer-events-none text-white/90 [text-shadow:0_0_2px_rgba(0,0,0,.45)]">
  <svg class="absolute left-[120px] top-0 w-[110px] h-[115px]" viewBox="0 0 110 115" fill="rgba(255,255,255,.75)" stroke="#cfcfcf" stroke-width="1.500">
    <ellipse cx="39" cy="17" rx="13" ry="17"/>
    <ellipse cx="70" cy="18" rx="13" ry="17"/>
    <ellipse cx="13" cy="40" rx="12" ry="17"/>
    <ellipse cx="88" cy="48" rx="12" ry="17"/>
    <path d="M50 40c14 0 18 14 30 26 12 12 10 38-10 44-10 3-14-2-20-2s-10 5-22 2c-18-5-20-30-6-44 10-10 14-26 28-26z"/>
  </svg>
  <span class="absolute left-[2px] top-[27px] text-[86px] leading-[86px] font-['Liberation_Sans',sans-serif] font-bold tracking-[4px]">Bai</span>
  <span class="absolute left-[143px] top-[52px] text-[50px] leading-[50px] font-['Liberation_Sans',sans-serif] font-bold text-[#d8d8d8] tracking-[-2px]">du</span>
  <span class="absolute left-[226px] top-[46px] text-[58px] leading-[64px] font-bold whitespace-nowrap">经验</span>
  <span class="absolute left-[4px] top-[117px] text-[41.500px] leading-[48px] font-['Liberation_Sans',sans-serif] tracking-[.2px] whitespace-nowrap">jingyan.baidu.com</span>
</div>

</div>
</body>
</html>
